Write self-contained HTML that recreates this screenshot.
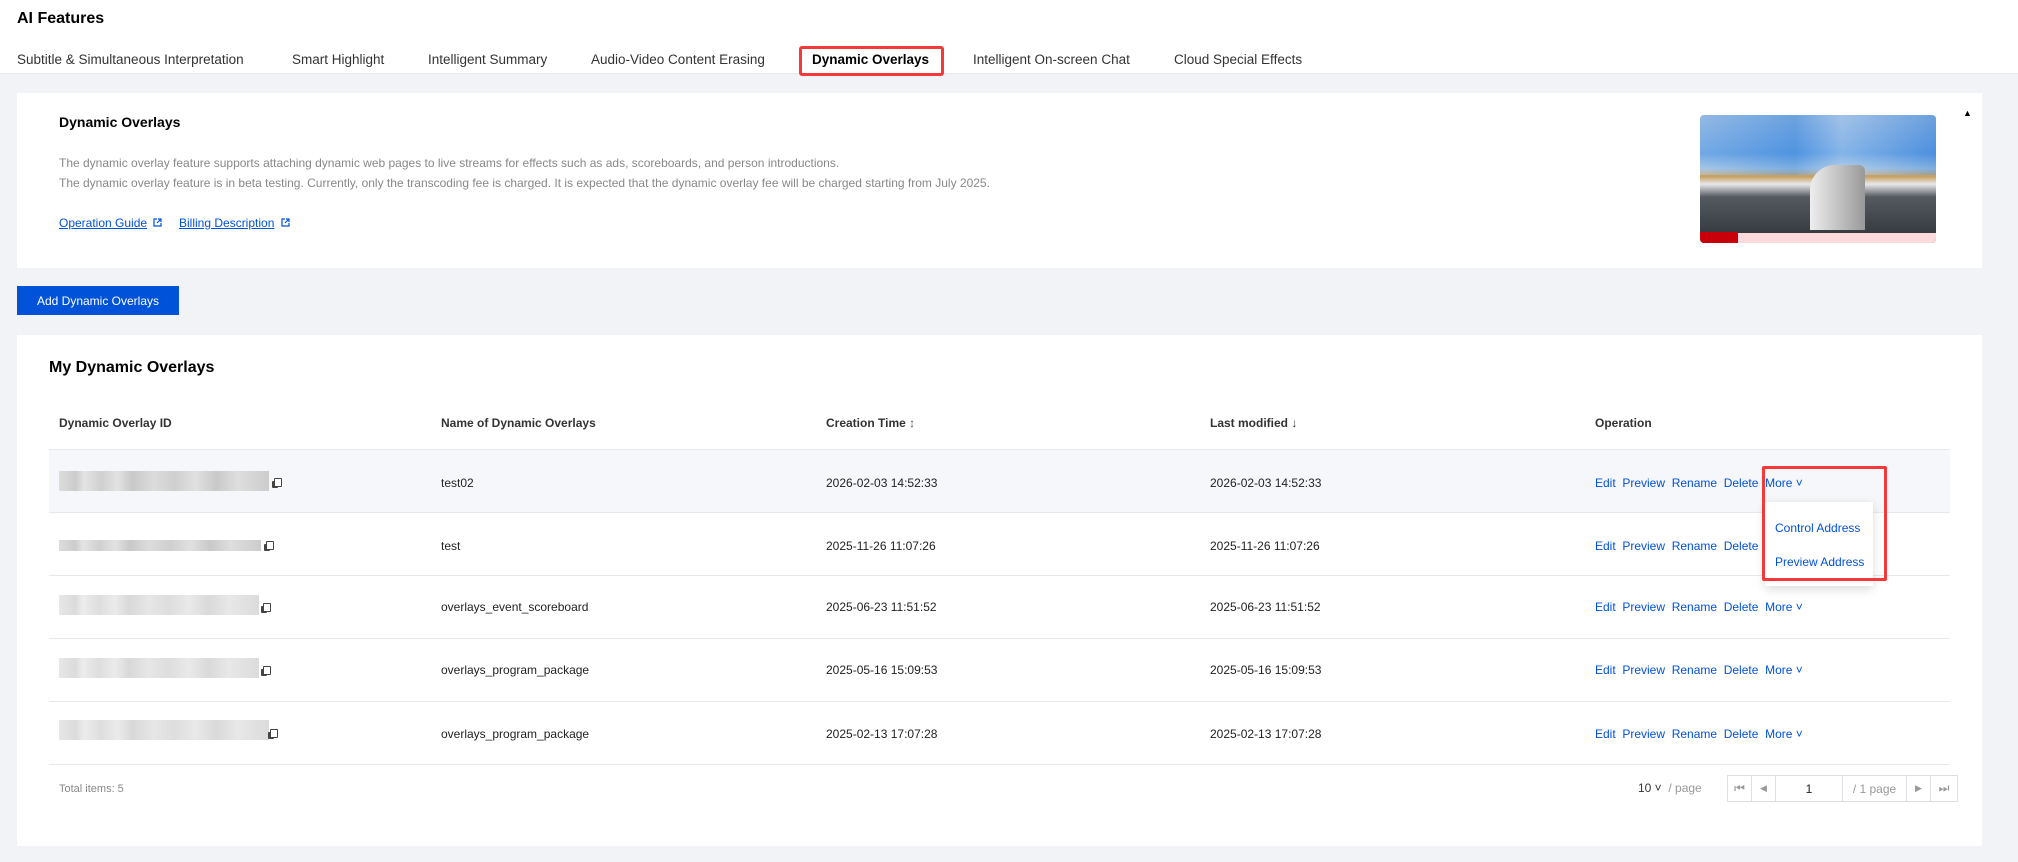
<!DOCTYPE html>
<html><head><meta charset="utf-8"><style>
*{margin:0;padding:0;box-sizing:border-box}
body{width:2018px;height:862px;background:#f2f3f7;font-family:"Liberation Sans",Arial,sans-serif;position:relative;overflow:hidden;color:#222}
.a{position:absolute;white-space:nowrap}
.hdr{position:absolute;left:0;top:0;width:2018px;height:74px;background:#fff;border-bottom:1px solid #e6e8ee}
.tab{position:absolute;top:51px;font-size:13.5px;color:#333;line-height:18px}
.card{position:absolute;background:#fff;left:17px;width:1965px}
.p{font-size:12px;color:#888;left:59px}
.lnk{font-size:12px;color:#0052d9;text-decoration:underline}
.th{top:416px;font-size:12px;font-weight:bold;color:#333}
.line{position:absolute;left:49px;width:1901px;height:1px;background:#e7e8ec}
.cell{font-size:12px;color:#222}
.op{font-size:12px;color:#0052d9}
.blur{position:absolute;left:59px;height:20px;background:linear-gradient(90deg,#ddd 0,#ccc 8%,#e4e4e4 12%,#d0d0d0 20%,#e2e2e2 28%,#c8c8c8 35%,#dcdcdc 45%,#cfcfcf 55%,#e0e0e0 65%,#c9c9c9 75%,#dedede 85%,#ccc 100%)}
.cp{position:absolute;width:9px;height:10px}
.cp:before{content:"";position:absolute;left:0;top:3px;width:6px;height:7px;background:#444;border-radius:1px}
.cp:after{content:"";position:absolute;left:2px;top:0;width:6px;height:7px;border:1.5px solid #444;background:#fff;border-radius:1px}
.pg{position:absolute;top:775px;height:27px;border:1px solid #dcdfe6;border-left:none;font-size:12px;color:#999;display:flex;align-items:center;justify-content:center}
</style></head><body>
<div class="hdr"></div>
<div class="a" style="left:17px;top:10px;font-size:16px;font-weight:bold;color:#000">AI Features</div>
<div class="a tab" style="left:17px">Subtitle &amp; Simultaneous Interpretation</div>
<div class="a tab" style="left:292px">Smart Highlight</div>
<div class="a tab" style="left:428px">Intelligent Summary</div>
<div class="a tab" style="left:591px">Audio-Video Content Erasing</div>
<div class="a tab" style="left:812px;font-weight:bold;color:#000">Dynamic Overlays</div>
<div class="a" style="left:799px;top:46px;width:145px;height:30px;border:3px solid #f5393b;border-radius:3px"></div>
<div class="a tab" style="left:973px">Intelligent On-screen Chat</div>
<div class="a tab" style="left:1174px">Cloud Special Effects</div>

<div class="card" style="top:93px;height:175px"></div>
<div class="a" style="left:59px;top:114px;font-size:14px;font-weight:bold;color:#000">Dynamic Overlays</div>
<div class="a p" style="top:156px">The dynamic overlay feature supports attaching dynamic web pages to live streams for effects such as ads, scoreboards, and person introductions.</div>
<div class="a p" style="top:176px">The dynamic overlay feature is in beta testing. Currently, only the transcoding fee is charged. It is expected that the dynamic overlay fee will be charged starting from July 2025.</div>
<div class="a lnk" style="left:59px;top:216px">Operation Guide</div>
<svg class="a" style="left:153px;top:218px" width="9" height="9" viewBox="0 0 9 9"><path d="M4 1H1v7h7V5M5 1h3v3M8 1L4 5" fill="none" stroke="#0052d9" stroke-width="1.2"/></svg>
<div class="a lnk" style="left:179px;top:216px">Billing Description</div>
<svg class="a" style="left:281px;top:218px" width="9" height="9" viewBox="0 0 9 9"><path d="M4 1H1v7h7V5M5 1h3v3M8 1L4 5" fill="none" stroke="#0052d9" stroke-width="1.2"/></svg>
<div class="a" style="left:1700px;top:115px;width:236px;height:128px;border-radius:4px;overflow:hidden;background:linear-gradient(180deg,#7aa8dd 0%,#4f93df 30%,#8fb8e0 42%,#c7a060 48%,#e8e8ea 54%,#555a60 64%,#2e3338 100%)">
 <div class="a" style="left:0;top:0;width:236px;height:60px;background:linear-gradient(90deg,rgba(255,255,255,.2),rgba(80,150,230,.3) 40%,rgba(255,255,255,.3) 60%,rgba(60,130,220,.2))"></div>
 <div class="a" style="left:110px;top:50px;width:55px;height:65px;background:linear-gradient(90deg,#eee,#999);border-radius:25px 6px 0 0"></div>
 <div class="a" style="left:0;top:118px;width:236px;height:10px;background:#fbd9dc"></div>
 <div class="a" style="left:0;top:117px;width:38px;height:11px;background:#c8000a"></div>
</div>
<div class="a" style="left:1963px;top:108px;font-size:9px;color:#000">▲</div>

<div class="a" style="left:17px;top:286px;width:162px;height:29px;background:#0052d9;color:#fff;font-size:12px;display:flex;align-items:center;justify-content:center">Add Dynamic Overlays</div>

<div class="card" style="top:335px;height:511px"></div>
<div class="a" style="left:49px;top:359px;font-size:16px;font-weight:bold;color:#000">My Dynamic Overlays</div>
<div class="a th" style="left:59px">Dynamic Overlay ID</div>
<div class="a th" style="left:441px">Name of Dynamic Overlays</div>
<div class="a th" style="left:826px">Creation Time <span style="color:#555;font-weight:normal">↕</span></div>
<div class="a th" style="left:1210px">Last modified <span style="color:#333">↓</span></div>
<div class="a th" style="left:1595px">Operation</div>
<div class="a" style="left:49px;top:449px;width:1901px;height:63px;background:#f6f7fa"></div>
<div class="line" style="top:449px"></div><div class="line" style="top:512px"></div><div class="line" style="top:575px"></div><div class="line" style="top:638px"></div><div class="line" style="top:701px"></div><div class="line" style="top:764px"></div>

<div class="blur" style="top:471px;width:210px"></div><div class="cp" style="left:272px;top:478px"></div>
<div class="blur" style="top:540px;width:202px;height:11px"></div><div class="cp" style="left:264px;top:541px"></div>
<div class="blur" style="top:595px;width:200px;opacity:.7"></div><div class="cp" style="left:261px;top:603px"></div>
<div class="blur" style="top:658px;width:200px;opacity:.7"></div><div class="cp" style="left:261px;top:666px"></div>
<div class="blur" style="top:720px;width:210px;opacity:.7"></div><div class="cp" style="left:268px;top:729px"></div>

<div class="a cell" style="left:441px;top:476px">test02</div>
<div class="a cell" style="left:441px;top:539px">test</div>
<div class="a cell" style="left:441px;top:600px">overlays_event_scoreboard</div>
<div class="a cell" style="left:441px;top:663px">overlays_program_package</div>
<div class="a cell" style="left:441px;top:727px">overlays_program_package</div>
<div class="a cell" style="left:826px;top:476px">2026-02-03 14:52:33</div>
<div class="a cell" style="left:826px;top:539px">2025-11-26 11:07:26</div>
<div class="a cell" style="left:826px;top:600px">2025-06-23 11:51:52</div>
<div class="a cell" style="left:826px;top:663px">2025-05-16 15:09:53</div>
<div class="a cell" style="left:826px;top:727px">2025-02-13 17:07:28</div>
<div class="a cell" style="left:1210px;top:476px">2026-02-03 14:52:33</div>
<div class="a cell" style="left:1210px;top:539px">2025-11-26 11:07:26</div>
<div class="a cell" style="left:1210px;top:600px">2025-06-23 11:51:52</div>
<div class="a cell" style="left:1210px;top:663px">2025-05-16 15:09:53</div>
<div class="a cell" style="left:1210px;top:727px">2025-02-13 17:07:28</div>

<div class="a op" style="left:1595px;top:476px">Edit&nbsp; Preview&nbsp; Rename&nbsp; Delete&nbsp; More ˅</div>
<div class="a op" style="left:1595px;top:539px">Edit&nbsp; Preview&nbsp; Rename&nbsp; Delete</div>
<div class="a op" style="left:1595px;top:600px">Edit&nbsp; Preview&nbsp; Rename&nbsp; Delete&nbsp; More ˅</div>
<div class="a op" style="left:1595px;top:663px">Edit&nbsp; Preview&nbsp; Rename&nbsp; Delete&nbsp; More ˅</div>
<div class="a op" style="left:1595px;top:727px">Edit&nbsp; Preview&nbsp; Rename&nbsp; Delete&nbsp; More ˅</div>

<div class="a" style="left:1765px;top:502px;width:108px;height:84px;background:#fff;box-shadow:0 3px 10px rgba(0,0,0,.15)"></div>
<div class="a op" style="left:1775px;top:521px">Control Address</div>
<div class="a op" style="left:1775px;top:555px">Preview Address</div>
<div class="a" style="left:1762px;top:466px;width:125px;height:115px;border:3px solid #f5393b;border-radius:2px"></div>

<div class="a" style="left:59px;top:783px;font-size:11px;color:#888">Total items: 5</div>
<div class="a" style="left:1638px;top:781px;font-size:12px;color:#333">10 ˅ <span style="color:#999">&nbsp;/ page</span></div>
<div class="pg" style="left:1727px;width:25px;border-left:1px solid #dcdfe6">⏮</div>
<div class="pg" style="left:1752px;width:24px;font-size:9px">◀</div>
<div class="pg" style="left:1776px;width:67px;color:#222">1</div>
<div class="pg" style="left:1843px;width:64px">/ 1 page</div>
<div class="pg" style="left:1907px;width:24px;font-size:9px">▶</div>
<div class="pg" style="left:1931px;width:27px">⏭</div>
</body></html>
